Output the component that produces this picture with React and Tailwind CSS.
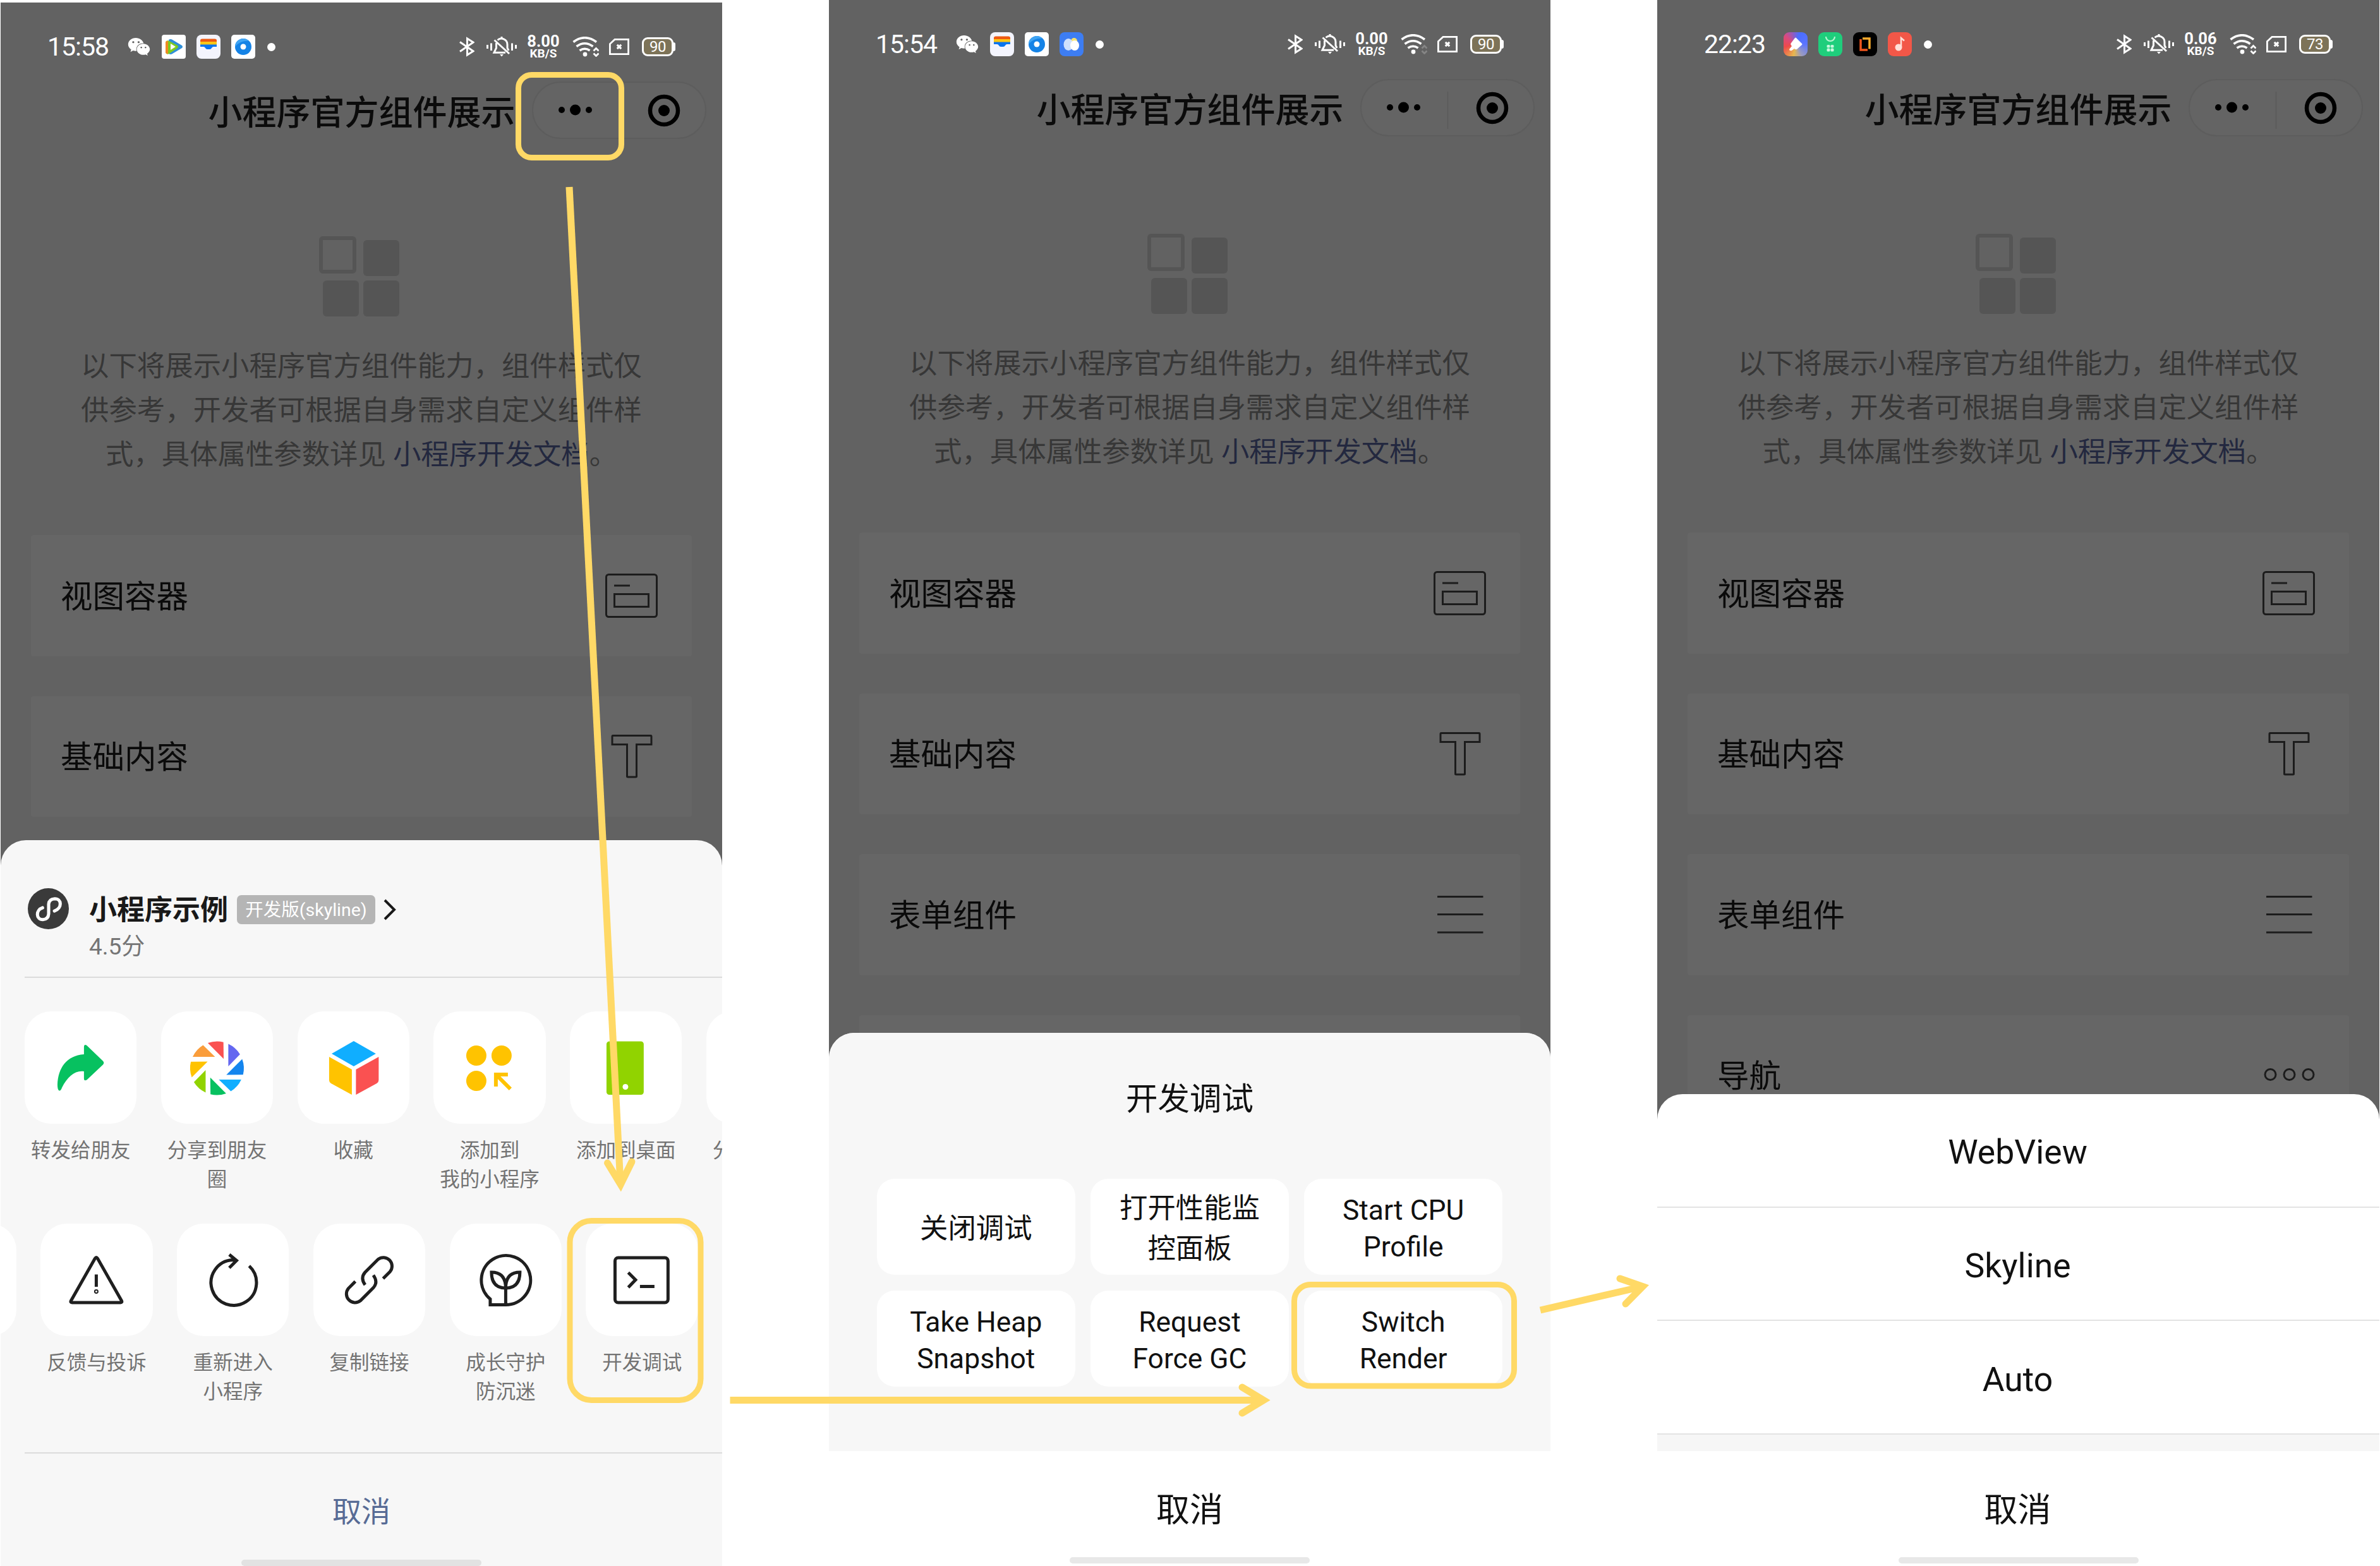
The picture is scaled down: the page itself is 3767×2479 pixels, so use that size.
import React from "react";
import { FaWeixin } from "react-icons/fa";

const YELLOW = "#ffd966";

/* ---------- status bar ---------- */

function VideoApp() {
  return (
    <svg className="h-[38px] w-[38px]" viewBox="0 0 38 38">
      <rect width="38" height="38" rx="4" fill="#fff" />
      <path d="M11 8 Q14 6 17 8 L32 17 Q34 19 32 21 L17 30 Q14 32 11 30Z" fill="#2f8fd8" />
      <path d="M6 12 Q7 8 12 10 L25 17 Q27 19 25 21 L12 30 Q7 32 6 28Z" fill="#7ecb1f" />
      <path d="M6 12 Q7 9 10 10 V30 Q7 31 6 28Z" fill="#f08a24" />
      <path d="M14 14 L22 19 L14 24Z" fill="#fff" />
    </svg>
  );
}

function WalletApp() {
  return (
    <svg className="h-[38px] w-[38px]" viewBox="0 0 38 38">
      <rect width="38" height="38" rx="8" fill="#f3f4fd" />
      <path d="M6 9 Q6 6.500 9 6.500 H29 Q32 6.500 32 9 V12 H6Z" fill="#ee5a12" />
      <rect x="6" y="11" width="26" height="5" fill="#fbc616" />
      <path d="M6 15.500 H32 V19 H27 Q25 19 24 21 Q23 23 21 23 H17 Q15 23 14 21 Q13 19 11 19 H6Z" fill="#0a74ee" />
    </svg>
  );
}

function BrowserApp() {
  return (
    <svg className="h-[38px] w-[38px]" viewBox="0 0 38 38">
      <rect width="38" height="38" rx="5" fill="#fff" />
      <circle cx="19" cy="19" r="13" fill="#1583e6" />
      <path d="M6 19 A13 13 0 0 1 28 9.800 Q14 9 6 19Z" fill="#3fa4f3" />
      <circle cx="19" cy="19" r="4.500" fill="#fff" />
    </svg>
  );
}

function WeatherApp() {
  return (
    <svg className="h-[38px] w-[38px]" viewBox="0 0 38 38">
      <rect width="38" height="38" rx="8" fill="#3d7df2" />
      <circle cx="23" cy="14" r="5" fill="#f9e36b" />
      <ellipse cx="14" cy="19.500" rx="7.500" ry="9.500" fill="#cfe0fd" />
      <ellipse cx="24" cy="21" rx="7" ry="8" fill="#fff" />
    </svg>
  );
}

function BrushApp() {
  return (
    <div className="flex h-[38px] w-[38px] items-center justify-center rounded-[9px] bg-[conic-gradient(from_20deg,#4a6dff,#5b74ff_70deg,#9a9bc0_130deg,#e8b84e_170deg,#ee4a4a_235deg,#d84a80_290deg,#4a6dff)]">
      <svg className="h-[38px] w-[38px]" viewBox="0 0 38 38">
        <path d="M18 9 Q19 8 20 9 L29 18 Q30 19 29 20 L21 27 Q19 28 17 26 L13 29 Q9 30 9 27 L13 22 Q10 19 12 17Z" fill="#fff" />
      </svg>
    </div>
  );
}

function CloverApp() {
  return (
    <svg className="h-[38px] w-[38px]" viewBox="0 0 38 38">
      <rect width="38" height="38" rx="9" fill="#1fce7c" />
      <path d="M12 7 A7 7 0 0 0 26 7" fill="none" stroke="#b6f5d2" strokeWidth="2.200" />
      <g fill="#c9f8de">
        <rect x="13.500" y="20" width="5" height="4.500" rx="1.500" />
        <rect x="19.500" y="20" width="5" height="4.500" rx="1.500" />
        <rect x="13.500" y="25.500" width="5" height="5" rx="1.500" />
        <rect x="19.500" y="25.500" width="5" height="5" rx="1.500" />
      </g>
    </svg>
  );
}

function FrameApp() {
  return (
    <svg className="h-[38px] w-[38px]" viewBox="0 0 38 38">
      <rect width="38" height="38" rx="9" fill="#000" />
      <path d="M15 10 H26 V26.500" fill="none" stroke="#f9ab2d" strokeWidth="3.500" />
      <path d="M12 11 V28 H23" fill="none" stroke="#f0561d" strokeWidth="3.500" />
    </svg>
  );
}

function MusicApp() {
  return (
    <svg className="h-[38px] w-[38px]" viewBox="0 0 38 38">
      <rect width="38" height="38" rx="9" fill="#f25748" />
      <circle cx="17" cy="24" r="5.500" fill="#ffe0d8" />
      <path d="M21 24 V9 L26 13.500" fill="none" stroke="#ffe0d8" strokeWidth="2.500" />
    </svg>
  );
}

function WeChatApp() {
  return (
    <span className="flex h-[38px] w-[38px] items-center justify-center text-white">
      <FaWeixin className="h-[38px] w-[36px]" />
    </span>
  );
}

function SystemIcons({ speed, battery, idle }) {
  return (
    <div className="flex items-center text-white">
      <svg className="h-8 w-6" viewBox="0 0 24 32" fill="none" stroke="currentColor" strokeWidth="3">
        <path d="M1 8.500 L22 23 L12.500 29 V3 L22 9 L1 23.500" />
      </svg>
      <svg className="ml-[19px] h-8 w-12" viewBox="0 0 48 32" fill="none" stroke="currentColor" strokeWidth="3">
        <path d="M1.500 13 V19 M7.500 10.500 V22 M40.500 10.500 V22 M46.500 13 V19" />
        <path
          d="M12.500 5.500 L36 27 M15.500 10 V18 L12 25.200 H30 M17.500 5.500 C23 0.500 33 4 33 12.500 V18 L35 22"
          strokeWidth="3"
        />
        <path d="M24 0 V4" />
        <path d="M21 28 H27 L24 31.500Z" fill="currentColor" stroke="none" />
      </svg>
      <div className="ml-[15px] flex w-[54px] flex-col items-center font-bold">
        <span className="text-[25.5px] leading-[21px]">{speed}</span>
        <span className="text-[19px] leading-[17px]">KB/S</span>
      </div>
      <svg className="ml-[19px] h-8 w-[42px]" viewBox="0 0 42 32" fill="none" stroke="currentColor" strokeWidth="3.600">
        <path d="M1.500 8.500 Q19.500 -5 38 8.500" />
        <path d="M6.500 15.500 Q19.500 6 32.500 15.500" />
        <path d="M11.500 22 Q19.500 16.500 27.500 22" />
        <circle cx="20" cy="28" r="3.400" fill="currentColor" stroke="none" />
        <g stroke={idle ? "#858585" : "currentColor"} strokeWidth="2.800">
          <path d="M33.500 22.500 L37.500 18.500 L41.500 22.500 M33.500 26.500 L37.500 30.500 L41.500 26.500" />
        </g>
      </svg>
      <svg className="ml-4 h-[26px] w-8" viewBox="0 0 32 26" fill="none" stroke="currentColor" strokeWidth="2.800">
        <path d="M9 1.400 H30.600 V24.600 H1.400 V8.500Z" />
        <path d="M12.800 9.800 L19.200 16.200 M19.200 9.800 L12.800 16.200" strokeWidth="3.200" />
      </svg>
      <div className="ml-5 flex items-center">
        <div className="flex h-[30px] w-[50px] items-center justify-center rounded-[9px] border-3 border-white bg-[#7d7358] text-[24px] leading-[24px] tracking-[-0.5px]">
          {battery}
        </div>
        <div className="h-[14px] w-[3px] rounded-r-[3px] bg-white" />
      </div>
    </div>
  );
}

function StatusBar({ time, apps, speed, battery, idle }) {
  return (
    <div className="flex h-[125px] justify-between pt-[50px] pr-[74px] pl-[74px]">
      <div className="flex h-10 items-center">
        <div className="w-[126px] text-[41px] leading-10 tracking-[-1px] text-white">{time}</div>
        <div className="flex items-center gap-[17px]">
          {apps.map((App, i) => (
            <App key={i} />
          ))}
        </div>
        <div className="ml-[19px] h-[13px] w-[13px] rounded-full bg-white" />
      </div>
      <div className="flex h-10 items-center">
        <SystemIcons speed={speed} battery={battery} idle={idle} />
      </div>
    </div>
  );
}

/* ---------- mini program page ---------- */

function Capsule({ divider }) {
  return (
    <svg className="h-[91px] w-[276px] shrink-0" viewBox="-6 0 276 91">
      <rect x="-5" y="1" width="274" height="89" rx="44.500" fill="#646464" stroke="#5d5d5d" strokeWidth="2" />
      {divider && <path d="M132.500 20 V79" stroke="#5a5a5a" strokeWidth="1.500" />}
      <circle cx="41" cy="45" r="5" />
      <circle cx="62.500" cy="45" r="8.500" />
      <circle cx="84" cy="45" r="5" />
      <circle cx="203" cy="46" r="22" fill="none" stroke="#000" strokeWidth="6.500" />
      <circle cx="203" cy="46" r="9" />
    </svg>
  );
}

const cardIcons = {
  view: (
    <>
      <rect x="9.500" y="16.500" width="80" height="67" rx="4" />
      <path d="M22 34 H47" />
      <rect x="22.500" y="47.500" width="54" height="20" />
    </>
  ),
  text: (
    <path d="M20 17.500 H80 Q81 17.500 81 19 V31.500 H57.500 V82 Q57.500 83 56 83 H44 Q42.500 83 42.500 82 V31.500 H19 V19 Q19 17.500 20 17.500Z" />
  ),
  form: <path d="M14 21.500 H86.500 M14 49.500 H86.500 M14 78 H86.500" />,
  nav: (
    <>
      <circle cx="20.500" cy="49" r="8.500" />
      <circle cx="50.500" cy="49" r="8.500" />
      <circle cx="80.500" cy="49" r="8.500" />
    </>
  ),
};

const cards = [
  ["视图容器", "view"],
  ["基础内容", "text"],
  ["表单组件", "form"],
  ["导航", "nav"],
];

function Phone({ status, divider = true, width, children }) {
  return (
    <section className={`${width} relative h-[2479px] shrink-0 overflow-hidden bg-[#626262]`}>
      <StatusBar {...status} />
      <header className="flex h-[90px] items-center">
        <h1 className="w-[841px] shrink-0 pt-[11px] pl-[328.5px] text-[54px] leading-[80px] font-medium whitespace-nowrap text-[#0b0b0b]">
          小程序官方组件展示
        </h1>
        <Capsule divider={divider} />
      </header>
      <svg className="mt-[155px] ml-[504px] h-32 w-32" viewBox="0 0 128 128" fill="#555">
        <rect x="3" y="3" width="53" height="53" rx="3" fill="none" stroke="#555" strokeWidth="6" />
        <rect x="70" y="6" width="57" height="57" rx="6" />
        <rect x="6" y="70" width="57" height="57" rx="6" />
        <rect x="70" y="70" width="57" height="57" rx="6" />
      </svg>
      <p className="mt-[43px] text-center text-[44.4px] leading-[70px] whitespace-nowrap text-[#373737]">
        以下将展示小程序官方组件能力，组件样式仅
        <br />
        供参考，开发者可根据自身需求自定义组件样
        <br />
        式，具体属性参数详见 <span className="text-[#23283f]">小程序开发文档</span>。
      </p>
      <div className="mx-12 mt-[92px] flex flex-col gap-[63px]">
        {cards.map(([label, icon]) => (
          <div
            key={icon}
            className="flex h-[191.5px] shrink-0 items-center justify-between rounded bg-[#666] pr-[45px] pl-[47px]"
          >
            <span className="pt-1 text-[50.5px] leading-[70px] text-[#0a0a0a]">{label}</span>
            <svg className="h-[100px] w-[100px]" viewBox="0 0 100 100" fill="none" stroke="#1c1c1c" strokeWidth="3">
              {cardIcons[icon]}
            </svg>
          </div>
        ))}
      </div>
      {children}
    </section>
  );
}

function HomeBar({ tone }) {
  return <div className={`${tone} mx-auto h-[10px] w-[380px] shrink-0 rounded-full`} />;
}

/* ---------- share sheet ---------- */

const bladeColors = ["#6467f0", "#1485ee", "#10aeff", "#07c160", "#91d300", "#ffc300", "#fa9d3b", "#fa5151"];

const shareActions = [
  {
    label: ["转发给朋友"],
    icon: (
      <path
        fill="#07c160"
        d="M94 57 Q94 51 98.500 54 L124 78.500 Q127 81.500 124 84.500 L98.500 108.500 Q94 111 94 106 V95 C80 93 68 103 59 121 Q57 127 54 125 Q52 123 52 116 C53 90 66 70 94 68Z"
      />
    ),
  },
  {
    label: ["分享到朋友", "圈"],
    icon: (
      <g transform="translate(88.500 90)">
        {bladeColors.map((c, i) => (
          <path key={c} d="M18 -38.500 A42.500 42.500 0 0 1 36.500 -22 L18 -3Z" fill={c} transform={`rotate(${i * 45})`} />
        ))}
      </g>
    ),
  },
  {
    label: ["收藏"],
    icon: (
      <>
        <path d="M89 47 L124 67 L89 87 L54 67Z" fill="#10aeff" />
        <path d="M50 72 L86 92 V132 L53 114 Q50 112 50 109Z" fill="#ffc300" />
        <path d="M128.500 72 L92.500 92 V132 L125.500 114 Q128.500 112 128.500 109Z" fill="#fa5151" />
      </>
    ),
  },
  {
    label: ["添加到", "我的小程序"],
    icon: (
      <>
        <g fill="#ffc300">
          <circle cx="68" cy="70" r="16" />
          <circle cx="108" cy="70" r="16" />
          <circle cx="68" cy="110" r="16" />
        </g>
        <path d="M118 100 H99 V119 M100 101 L122 123" fill="none" stroke="#ffc300" strokeWidth="6" />
      </>
    ),
  },
  {
    label: ["添加到桌面"],
    icon: (
      <>
        <rect x="58" y="47.500" width="59" height="84.500" rx="4.500" fill="#91d300" />
        <circle cx="88" cy="119.500" r="4.500" fill="#fff" />
      </>
    ),
  },
  { label: ["分享到朋友"], icon: null },
];

const toolActions = [
  { label: [], icon: null },
  {
    label: ["反馈与投诉"],
    icon: (
      <>
        <path d="M86.500 55 Q88.500 52 90.500 55 L128.500 122 Q130 125 127 125 H50 Q47 125 48.500 122Z" />
        <path d="M88.500 80.500 V100" />
        <circle cx="88.500" cy="107.500" r="1" />
      </>
    ),
  },
  {
    label: ["重新进入", "小程序"],
    icon: (
      <>
        <path d="M114.500 67 A36 36 0 1 1 88 57.500 L94 58.500" />
        <path d="M83 49 L94.500 58.500 L83 70" />
      </>
    ),
  },
  {
    label: ["复制链接"],
    icon: (
      <>
        <path d="M110.500 87 L121.500 76 A13.700 13.700 0 0 0 102.500 56.500 L82 77 Q74 86 82 97" />
        <path d="M66.500 91.600 L55.500 102.600 A13.700 13.700 0 0 0 74.500 122.100 L95 101.600 Q103 92.600 95 81.600" />
      </>
    ),
  },
  {
    label: ["成长守护", "防沉迷"],
    icon: (
      <>
        <path d="M88.500 128.500 A39 39 0 1 0 64 119.500 V128.500 H88.500 V101" />
        <path d="M66 77 C66 95 75 102 88.500 102 C88.500 84 80 77 66 77Z" />
        <path d="M111 77 C111 95 102 102 88.500 102 C88.500 84 97 77 111 77Z" />
      </>
    ),
  },
  {
    label: ["开发调试"],
    icon: (
      <>
        <rect x="46.500" y="54" width="84" height="71" rx="5" />
        <path d="M67.500 77.500 L79 89 L67.500 101" />
        <path d="M86 99.500 H109" />
      </>
    ),
  },
];

function ActionRow({ actions, outline }) {
  return (
    <div className="flex gap-[38.5px]">
      {actions.map((a, i) => (
        <div key={i} className="flex w-[177.3px] shrink-0 flex-col items-center">
          <svg
            className="h-[178px] w-[177.3px] rounded-[42px] bg-white"
            viewBox="0 0 177.500 178"
            fill="none"
            stroke={outline ? "#1f1f1f" : "none"}
            strokeWidth="5"
          >
            {a.icon}
          </svg>
          <div className="mt-[20px] text-center text-[31.5px] leading-[46px] whitespace-nowrap text-[#737373]">
            {a.label.map((line) => (
              <div key={line}>{line}</div>
            ))}
          </div>
        </div>
      ))}
    </div>
  );
}

function ShareSheet() {
  return (
    <div className="absolute inset-x-0 top-[1326px] flex h-[1149px] flex-col rounded-t-[40px] bg-[#f7f7f7]">
      <div className="flex h-[216px] shrink-0 pt-[76px] pl-[43px]">
        <svg className="h-[65px] w-[65px]" viewBox="0 0 64 64">
          <circle cx="32" cy="32" r="32" fill="#3a3a3a" />
          <path
            d="M41.500 35.500 C54 31 53 16.500 42 16.500 Q33 17 32.500 25 V40 Q32 48.500 23.500 49 C12.500 49 12 34 23 30.500"
            fill="none"
            stroke="#fff"
            strokeWidth="5"
            strokeLinecap="round"
          />
        </svg>
        <div className="ml-8">
          <div className="flex h-[67px] items-center">
            <span className="pt-[2px] text-[44px] leading-[60px] font-bold text-[#191919]">小程序示例</span>
            <span className="ml-[14px] flex h-[46px] w-[219px] items-center justify-center rounded-[7px] bg-[#b5b5b5] pt-[2px] text-[28.5px] leading-[40px] whitespace-nowrap text-white">
              开发版(skyline)
            </span>
            <svg className="ml-[12px] h-[36px] w-[22px]" viewBox="0 0 22 36" fill="none" stroke="#191919" strokeWidth="4">
              <path d="M3 3 L18 18 L3 33" />
            </svg>
          </div>
          <div className="text-[37px] leading-[52px] text-[#757575]">4.5分</div>
        </div>
      </div>
      <div className="ml-[38px] h-[2px] shrink-0 bg-[#dcdcdc]" />
      <div className="mt-[53px] ml-[38px] h-[336px] shrink-0">
        <ActionRow actions={shareActions} />
      </div>
      <div className="ml-[-152.5px] h-[362px] shrink-0">
        <ActionRow actions={toolActions} outline />
      </div>
      <div className="ml-[38px] h-[2px] shrink-0 bg-[#dcdcdc]" />
      <div className="flex h-[168px] shrink-0 items-center justify-center pt-4 text-[46px] leading-[60px] text-[#576b95]">
        取消
      </div>
      <HomeBar tone="bg-[#e2e2e2]" />
    </div>
  );
}

/* ---------- debug sheet ---------- */

const debugButtons = [
  ["关闭调试"],
  ["打开性能监", "控面板"],
  ["Start CPU", "Profile"],
  ["Take Heap", "Snapshot"],
  ["Request", "Force GC"],
  ["Switch", "Render"],
];

function DebugSheet() {
  return (
    <div className="absolute inset-x-0 top-[1635px] flex h-[844px] flex-col overflow-hidden rounded-t-[40px] bg-white">
      <div className="h-[662px] shrink-0 bg-[#f7f7f7]">
        <div className="h-[231px] pt-[68px] text-center text-[50.5px] leading-[74px] text-[#111]">开发调试</div>
        <div className="mx-[76px] grid grid-cols-3 gap-x-[24.5px] gap-y-[25px]">
          {debugButtons.map((lines, i) => (
            <div
              key={lines[0]}
              className={`${i < 2 ? "leading-[64px]" : "leading-[58px]"} flex h-[152px] flex-col items-center justify-center rounded-[28px] bg-white pt-[6px] text-[44.4px] whitespace-nowrap text-[#111]`}
            >
              {lines.map((line) => (
                <div key={line}>{line}</div>
              ))}
            </div>
          ))}
        </div>
      </div>
      <div className="flex h-[168px] shrink-0 items-center justify-center pt-5 text-[53px] leading-[70px] text-[#111]">取消</div>
      <HomeBar tone="bg-[#e8e8e8]" />
    </div>
  );
}

/* ---------- renderer picker ---------- */

function RenderSheet() {
  return (
    <div className="absolute inset-x-0 top-[1732px] flex h-[747px] flex-col overflow-hidden rounded-t-[40px] bg-white">
      {["WebView", "Skyline", "Auto"].map((name) => (
        <div
          key={name}
          className="flex h-[179.7px] shrink-0 items-center justify-center border-b-2 border-[#e3e3e3] pt-[7px] pr-[2px] text-[53.5px] leading-[70px] text-[#111]"
        >
          {name}
        </div>
      ))}
      <div className="h-[26px] shrink-0 bg-[#f6f6f6]" />
      <div className="flex h-[168px] shrink-0 items-center justify-center pt-5 pr-[2px] text-[53px] leading-[70px] text-[#111]">
        取消
      </div>
      <HomeBar tone="bg-[#e8e8e8]" />
    </div>
  );
}

/* ---------- annotations ---------- */

function Annotations() {
  return (
    <svg
      className="pointer-events-none absolute inset-0 h-[2479px] w-[3767px]"
      viewBox="0 0 3767 2479"
      fill="none"
      stroke={YELLOW}
      strokeWidth="11"
    >
      <path d="M901 296 L982 1874" />
      <path d="M961.500 1841 L982.300 1875 L1000 1839" strokeLinecap="round" strokeMiterlimit="10" />
      <path d="M1155.500 2216.500 H1997" />
      <path d="M1966 2196 L2000 2216.500 L1966 2237" strokeLinecap="round" />
      <path d="M2438 2074 L2596 2037.500" />
      <path d="M2564 2024 L2600 2036.500 L2573 2064" strokeLinecap="round" />
      <g strokeWidth="9">
        <rect x="820.500" y="118.500" width="163" height="131" rx="21" />
        <rect x="902" y="1932.500" width="207" height="284" rx="34" />
        <rect x="2048.500" y="2033.500" width="348" height="160.500" rx="26" />
      </g>
    </svg>
  );
}

export default function App() {
  return (
    <main className="relative flex h-[2479px] w-[3767px] gap-[169px] overflow-hidden bg-white pl-px font-['Roboto','Noto_Sans_CJK_SC',sans-serif]">
      <div className="pt-1">
        <Phone
          width="w-[1142px]"
          divider={false}
          status={{ time: "15:58", apps: [WeChatApp, VideoApp, WalletApp, BrowserApp], speed: "8.00", battery: "90" }}
        >
          <ShareSheet />
        </Phone>
      </div>
      <Phone
        width="w-[1142px]"
        status={{
          time: "15:54",
          apps: [WeChatApp, WalletApp, BrowserApp, WeatherApp],
          speed: "0.00",
          battery: "90",
          idle: true,
        }}
      >
        <DebugSheet />
      </Phone>
      <Phone
        width="w-[1143px]"
        status={{ time: "22:23", apps: [BrushApp, CloverApp, FrameApp, MusicApp], speed: "0.06", battery: "73" }}
      >
        <RenderSheet />
      </Phone>
      <Annotations />
    </main>
  );
}
